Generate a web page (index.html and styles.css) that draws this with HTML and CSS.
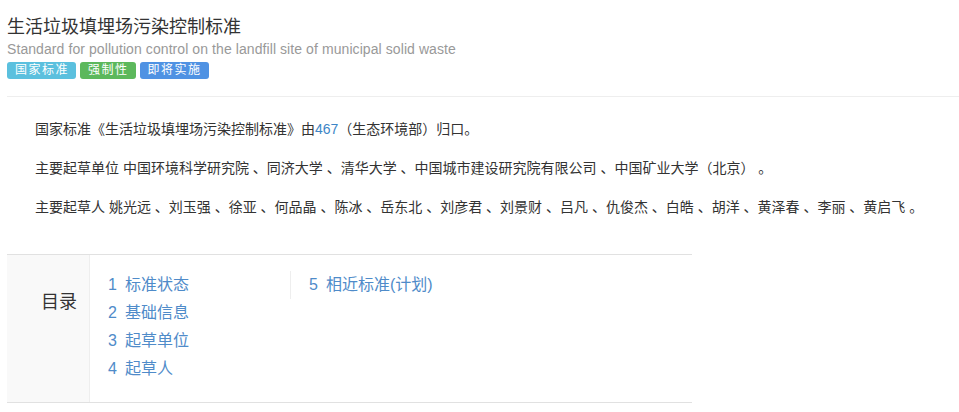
FILE: index.html
```html
<!DOCTYPE html>
<html lang="zh-CN">
<head>
<meta charset="utf-8">
<title>生活垃圾填埋场污染控制标准</title>
<link rel="stylesheet" href="styles.css">
</head>
<body>
<div class="page">
  <header class="head">
    <h1 class="title">生活垃圾填埋场污染控制标准</h1>
    <div class="subtitle">Standard for pollution control on the landfill site of municipal solid waste</div>
    <div class="tags">
      <span class="tag tag-info">国家标准</span>
      <span class="tag tag-success">强制性</span>
      <span class="tag tag-primary">即将实施</span>
    </div>
  </header>
  <section class="intro">
    <p>国家标准《生活垃圾填埋场污染控制标准》由<a class="link" href="#">467</a>（生态环境部）归口。</p>
    <p>主要起草单位 中国环境科学研究院 、同济大学 、清华大学 、中国城市建设研究院有限公司 、中国矿业大学（北京） 。</p>
    <p>主要起草人 姚光远 、刘玉强 、徐亚 、何品晶 、陈冰 、岳东北 、刘彦君 、刘景财 、吕凡 、仇俊杰 、白皓 、胡洋 、黄泽春 、李丽 、黄启飞 。</p>
  </section>
  <section class="toc">
    <div class="toc-label">目录</div>
    <div class="toc-body">
      <ul class="toc-col">
        <li><span class="num">1</span>标准状态</li>
        <li><span class="num">2</span>基础信息</li>
        <li><span class="num">3</span>起草单位</li>
        <li><span class="num">4</span>起草人</li>
      </ul>
      <ul class="toc-col toc-col2">
        <li><span class="num">5</span>相近标准(计划)</li>
      </ul>
    </div>
  </section>
</div>
</body>
</html>
```

FILE: styles.css
```css
html, body {
  margin: 0;
  padding: 0;
  background: #fff;
}
body {
  font-family: "Liberation Sans", Arial, "Noto Sans CJK SC", sans-serif;
  color: #333;
}
.page {
  padding-left: 7px;
}
.head {
  padding-top: 15px;
  padding-bottom: 17px;
  border-bottom: 1px solid #eee;
}
.title {
  margin: 0;
  font-size: 18px;
  line-height: 24px;
  font-weight: normal;
  color: #333;
}
.subtitle {
  font-size: 14px;
  line-height: 20px;
  letter-spacing: 0.08px;
  color: #999;
}
.tags {
  display: flex;
  gap: 4px;
  margin-top: 3px;
}
.tag {
  display: inline-block;
  height: 17px;
  line-height: 17px;
  padding: 0 7px 0 8px;
  font-size: 12px;
  letter-spacing: 1.5px;
  color: #fff;
  border-radius: 3px;
}
.tag-info { background: #5bc0de; }
.tag-success { background: #5cb85c; }
.tag-primary { background: #4f92e3; }

.intro {
  padding: 20px 0 0 28px;
  font-size: 14px;
  line-height: 24px;
}
.intro p {
  margin: 0 0 15px 0;
}
.intro p:last-child {
  margin-bottom: 0;
}
.link {
  color: #3d85c6;
  text-decoration: none;
}

.toc {
  display: flex;
  width: 685px;
  margin-top: 35px;
  border-top: 1px solid #e1e1e1;
  border-bottom: 1px solid #e1e1e1;
}
.toc-label {
  width: 48px;
  padding: 35px 0 0 34px;
  background: #f9f9f9;
  border-right: 1px solid #eee;
  font-size: 18px;
  line-height: 24px;
  color: #333;
}
.toc-body {
  display: flex;
  align-items: flex-start;
  padding: 16px 0 19px 18px;
}
.toc-col {
  list-style: none;
  margin: 0;
  padding: 0;
  width: 182px;
}
.toc-col li {
  font-size: 16px;
  line-height: 28px;
  color: #4f8bc9;
  white-space: nowrap;
}
.toc-col2 {
  border-left: 1px solid #eee;
  padding-left: 18px;
}
.num {
  display: inline-block;
  width: 17px;
}
```
